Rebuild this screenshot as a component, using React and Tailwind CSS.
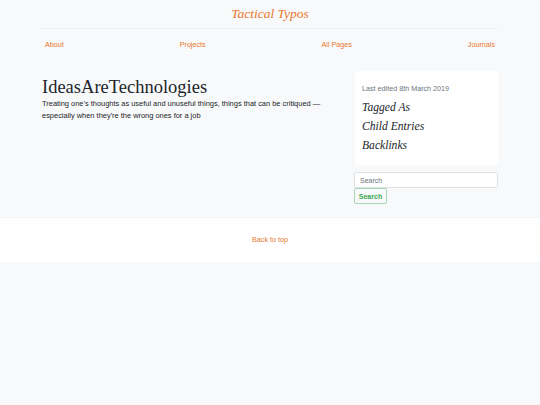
export default function App() {
  const serif = { fontFamily: '"Liberation Serif", "DejaVu Serif", serif' }
  const navLinks = ["About", "Projects", "All Pages", "Journals"]

  return (
    <div className="min-h-[405px] bg-[#f8f9fa] font-['Liberation_Sans',Arial,sans-serif]">
      <header className="mx-auto w-[456px]">
        <div className="pt-[4px] pb-[5px] border-b border-[#eceef0] text-center leading-[18px]">
          <a className="text-[13.5px] italic text-[#e8782e]" style={serif}>
            Tactical Typos
          </a>
        </div>
        <nav className="flex justify-between px-[3px] pt-[10px] text-[7.2px] leading-[11px] text-[#e8782e]">
          {navLinks.map((l) => (
            <a key={l}>{l}</a>
          ))}
        </nav>
      </header>

      <main className="mx-auto w-[456px] flex gap-[12px] pt-[21px] pb-[13px]">
        <div className="flex-1 pt-[6px]">
          <h1 className="text-[18.5px] leading-[21px] text-[#212529]" style={serif}>
            IdeasAreTechnologies
          </h1>
          <p className="text-[7.45px] leading-[12px] text-[#212529]">
            Treating one's thoughts as useful and unuseful things, things that can be critiqued — especially when they're the wrong ones for a job
          </p>
        </div>

        <aside className="w-[144px] flex flex-col items-start">
          <div className="w-[143px] self-end bg-white rounded-[2px] px-[7px] pt-[13px] pb-[10.5px]">
            <p className="text-[7.2px] leading-[10.8px] text-[#6c757d]">Last edited 8th March 2019</p>
            <h5 className="mt-[3px] text-[11.6px] italic leading-[19px] text-[#212529]" style={serif}>Tagged As</h5>
            <h5 className="text-[11.6px] italic leading-[19px] text-[#212529]" style={serif}>Child Entries</h5>
            <h5 className="text-[11.6px] italic leading-[19px] text-[#212529]" style={serif}>Backlinks</h5>
          </div>
          <input
            placeholder="Search"
            className="mt-[7px] block w-full h-[16px] px-[5px] bg-white border border-[#dfe2e5] rounded-[2px] text-[7px] placeholder:text-[#6c757d] outline-none"
          />
          <button className="block h-[16px] w-[33px] border border-[#a6d9b2] rounded-[2px] text-[7px] leading-none font-bold text-[#34a853] bg-transparent">
            Search
          </button>
        </aside>
      </main>

      <footer className="bg-white h-[45px] flex items-center justify-center border-t border-[#f1f3f5]">
        <a className="text-[7.2px] text-[#e8782e]">Back to top</a>
      </footer>
    </div>
  )
}
